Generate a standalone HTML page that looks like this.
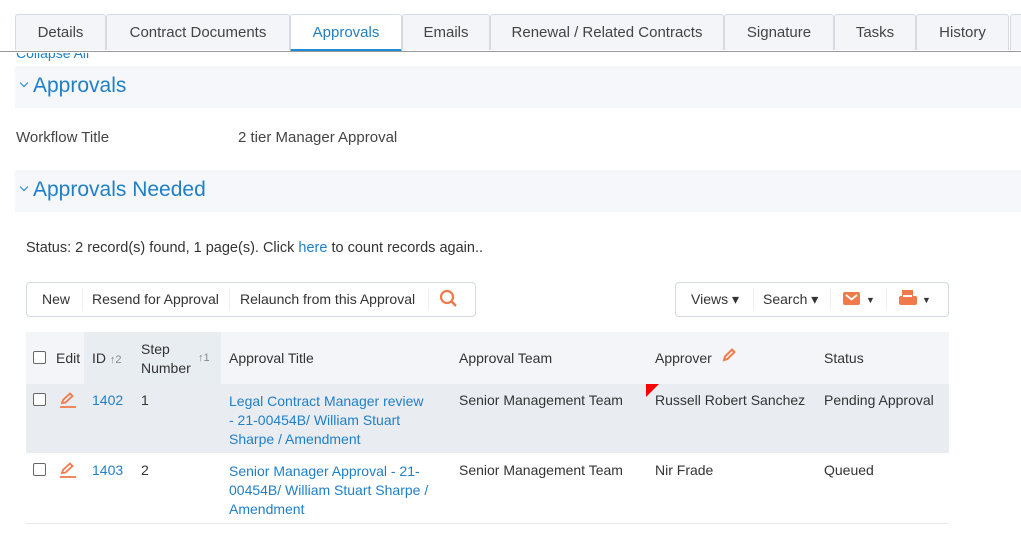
<!DOCTYPE html>
<html><head><style>
body{margin:0;width:1021px;height:533px;overflow:hidden;background:#fff;font-family:"Liberation Sans",sans-serif;font-size:14px;color:#333;position:relative}
.a{position:absolute;white-space:nowrap}
.tab{position:absolute;top:14px;height:36px;background:#f3f5f8;border:1px solid #d5d9e0;border-bottom:none;box-sizing:border-box;text-align:center;line-height:35px;font-size:15px;color:#444;border-radius:3px 3px 0 0}
.blue{color:#1f7fc8}
.sec{position:absolute;left:15px;right:0;height:42px;background:#f5f7fa}
.sec span{position:absolute;left:18px;top:8px;font-size:21px;color:#1f7fc8}
.sec i{position:absolute;left:6px;top:14px;width:5px;height:5px;border-right:1.6px solid #1f7fc8;border-bottom:1.6px solid #1f7fc8;transform:rotate(45deg)}
.cb{position:absolute;width:11px;height:11px;border:1px solid #666;border-radius:2px;background:#fff}
</style></head><body>
<div class="tab" style="left:15px;width:91px">Details</div>
<div class="tab" style="left:106px;width:184px">Contract Documents</div>
<div class="tab" style="left:290px;width:112px;background:#fff;color:#1f7fc8;border-bottom:3px solid #1f8ad6;height:38px">Approvals</div>
<div class="tab" style="left:402px;width:88px">Emails</div>
<div class="tab" style="left:490px;width:234px">Renewal / Related Contracts</div>
<div class="tab" style="left:724px;width:110px">Signature</div>
<div class="tab" style="left:834px;width:82px">Tasks</div>
<div class="tab" style="left:916px;width:93px">History</div>
<div class="tab" style="left:1010px;width:20px"></div>
<div class="a" style="left:0;right:0;top:51px;height:1px;background:#999"></div>
<div class="a blue" style="left:16px;top:45px;font-size:14px;clip-path:inset(8px 0 0 0)">Collapse All</div>
<div class="sec" style="top:66px"><i></i><span>Approvals</span></div>
<div class="a" style="left:16px;top:129px;font-size:15px;color:#444">Workflow Title</div>
<div class="a" style="left:238px;top:129px;font-size:15px;color:#444">2 tier Manager Approval</div>
<div class="sec" style="top:170px"><i></i><span>Approvals Needed</span></div>
<div class="a" style="left:26px;top:240px;font-size:14.5px">Status: 2 record(s) found, 1 page(s). Click <span class="blue">here</span> to count records again..</div>
<div class="a" style="left:26px;top:282px;width:448px;height:33px;border:1px solid #d5d9e0;border-radius:4px"></div>
<div class="a" style="left:42px;top:291px">New</div>
<div class="a" style="left:82px;top:288px;width:1px;height:22px;background:#eee"></div>
<div class="a" style="left:92px;top:291px">Resend for Approval</div>
<div class="a" style="left:229px;top:288px;width:1px;height:22px;background:#eee"></div>
<div class="a" style="left:240px;top:291px">Relaunch from this Approval</div>
<div class="a" style="left:428px;top:288px;width:1px;height:22px;background:#eee"></div>
<svg class="a" style="left:439px;top:289px" width="20" height="20"><circle cx="8" cy="8" r="6" fill="none" stroke="#f07a4a" stroke-width="2.2"/><line x1="12.5" y1="12.5" x2="17" y2="17" stroke="#f07a4a" stroke-width="2.5"/></svg>
<div class="a" style="left:675px;top:282px;width:272px;height:33px;border:1px solid #d5d9e0;border-radius:4px"></div>
<div class="a" style="left:691px;top:291px">Views ▾</div>
<div class="a" style="left:753px;top:288px;width:1px;height:22px;background:#eee"></div>
<div class="a" style="left:763px;top:291px">Search ▾</div>
<div class="a" style="left:830px;top:288px;width:1px;height:22px;background:#eee"></div>
<svg class="a" style="left:843px;top:292px" width="18" height="14"><rect x="0" y="0" width="17" height="13" rx="2" fill="#f07a4a"/><path d="M3 3 L8.5 7.5 L14 3" stroke="#fff" stroke-width="1.8" fill="none"/></svg>
<div class="a" style="left:866px;top:295px;font-size:9px">▼</div>
<div class="a" style="left:886px;top:288px;width:1px;height:22px;background:#eee"></div>
<svg class="a" style="left:899px;top:290px" width="18" height="16"><rect x="3" y="0" width="11" height="7" fill="#f07a4a"/><rect x="0" y="6" width="18" height="9" rx="2" fill="#f07a4a"/><rect x="4" y="5" width="9" height="2" fill="#fff"/></svg>
<div class="a" style="left:922px;top:295px;font-size:9px">▼</div>

<div class="a" style="left:26px;top:332px;width:923px;height:52px;background:#f3f5f8"></div>
<div class="a" style="left:84px;top:332px;width:137px;height:52px;background:#e8edf2"></div>
<div class="a" style="left:26px;top:384px;width:923px;height:69px;background:#e9edf2"></div>
<div class="a" style="left:26px;top:523px;width:923px;height:1px;background:#e5e8ec"></div>
<div class="cb" style="left:33px;top:351px"></div>
<div class="a" style="left:56px;top:350px">Edit</div>
<div class="a" style="left:92px;top:350px">ID <span style="color:#888;font-size:11px">↑2</span></div>
<div class="a" style="left:141px;top:340px;line-height:19px">Step<br>Number</div>
<div class="a" style="left:198px;top:352px;color:#888;font-size:11px">↑1</div>
<div class="a" style="left:229px;top:350px">Approval Title</div>
<div class="a" style="left:459px;top:350px">Approval Team</div>
<div class="a" style="left:655px;top:350px">Approver</div>
<svg class="a" style="left:722px;top:348px" width="14" height="14"><path d="M2 12 L3 8.5 L10 1.5 L12.5 4 L5.5 11 Z" fill="none" stroke="#f07a4a" stroke-width="2"/></svg>
<div class="a" style="left:824px;top:350px">Status</div>

<div class="cb" style="left:33px;top:393px"></div>
<svg class="a" style="left:59px;top:392px" width="18" height="17"><path d="M3 11 L4 8 L11 1.5 L13.5 4 L6.5 10.5 Z" fill="none" stroke="#f07a4a" stroke-width="1.8"/><line x1="1" y1="15" x2="17" y2="15" stroke="#f07a4a" stroke-width="1.8"/></svg>
<div class="a blue" style="left:92px;top:392px">1402</div>
<div class="a" style="left:141px;top:392px">1</div>
<div class="a blue" style="left:229px;top:392px;line-height:19px">Legal Contract Manager review<br>- 21-00454B/ William Stuart<br>Sharpe / Amendment</div>
<div class="a" style="left:459px;top:392px">Senior Management Team</div>
<svg class="a" style="left:646px;top:384px" width="14" height="14"><path d="M0 0 L13 0 L0 13 Z" fill="#f00"/></svg>
<div class="a" style="left:655px;top:392px">Russell Robert Sanchez</div>
<div class="a" style="left:824px;top:392px">Pending Approval</div>

<div class="cb" style="left:33px;top:463px"></div>
<svg class="a" style="left:59px;top:462px" width="18" height="17"><path d="M3 11 L4 8 L11 1.5 L13.5 4 L6.5 10.5 Z" fill="none" stroke="#f07a4a" stroke-width="1.8"/><line x1="1" y1="15" x2="17" y2="15" stroke="#f07a4a" stroke-width="1.8"/></svg>
<div class="a blue" style="left:92px;top:462px">1403</div>
<div class="a" style="left:141px;top:462px">2</div>
<div class="a blue" style="left:229px;top:462px;line-height:19px">Senior Manager Approval - 21-<br>00454B/ William Stuart Sharpe /<br>Amendment</div>
<div class="a" style="left:459px;top:462px">Senior Management Team</div>
<div class="a" style="left:655px;top:462px">Nir Frade</div>
<div class="a" style="left:824px;top:462px">Queued</div>
</body></html>
